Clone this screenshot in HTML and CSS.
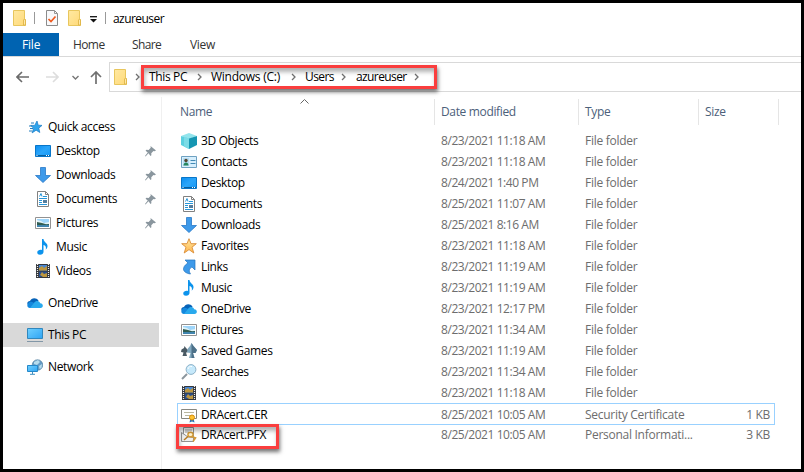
FILE: index.html
```
<!DOCTYPE html>
<html lang="en">
<head>
<meta charset="utf-8">
<title>azureuser</title>
<link rel="stylesheet" href="styles.css">
</head>
<body>
<svg class="sprite" aria-hidden="true">
  <defs>
    <linearGradient id="g-folder" x1="0" y1="0" x2="1" y2="1"><stop offset="0" stop-color="#ffe9a2"/><stop offset="1" stop-color="#ffd978"/></linearGradient>
    <linearGradient id="g-blue" x1="0" y1="0" x2="1" y2="1"><stop offset="0" stop-color="#0b8df0"/><stop offset=".5" stop-color="#2ba6fa"/><stop offset="1" stop-color="#1597f5"/></linearGradient>
    <linearGradient id="g-screen" x1="0" y1="0" x2="1" y2="1"><stop offset="0" stop-color="#6fd0ff"/><stop offset="1" stop-color="#2fa4f4"/></linearGradient>
    <linearGradient id="g-star" x1="0" y1="0" x2="0" y2="1"><stop offset="0" stop-color="#ffe7a0"/><stop offset="1" stop-color="#ffb64d"/></linearGradient>
  </defs>
  <symbol id="folder" viewBox="0 0 13 16"><path d="M.5.5h11v9h1v6H.5z" fill="url(#g-folder)" stroke="#e8c65d"/><path d="M10.5 15V10l1-1 1 1v5z" fill="#ffe9a8" stroke="#dcb03f" stroke-width=".8"/></symbol>
  <symbol id="check" viewBox="0 0 12 16"><path d="M.5.5h8l3 3v12H.5z" fill="#f8f9fb" stroke="#8b8b8b"/><path d="M8.500.5v3h3" fill="none" stroke="#999"/><path d="M2.500 9l2.500 2.500 4.500-5" fill="none" stroke="#f05a1e" stroke-width="1.700"/></symbol>
  <symbol id="quick" viewBox="0 0 16 16"><path d="M10 2l1.200 4.200 3.800.2-3.200 2.700 1 4.400-3.700-2.300-4 2.700 1.500-4.600-2.900-2.900h4z" fill="#2fa5ed" stroke="#1679c4" stroke-width=".7"/><path d="M4 4h3M2 7h3M3 9.500h3M2 12h3" stroke="#267fbd"/></symbol>
  <symbol id="desktop" viewBox="0 0 16 16"><path d="M.5 2.500h15v11H.5z" fill="url(#g-blue)" stroke="#0876c9"/><path d="M1 12.500h14" stroke="#075f9e"/><path d="M1.500 12.500h1M11 12.500h1M13 12.500h1" stroke="#fff"/></symbol>
  <symbol id="download" viewBox="0 0 16 16"><path d="M5.500.5h5v8h5L8 15.500.5 8.500h5z" fill="#3e9aea" stroke="#2878c8" stroke-width=".8"/></symbol>
  <symbol id="document" viewBox="0 0 16 16"><path d="M2.500.5h8l3 3v12h-11z" fill="#fff" stroke="#818181"/><path d="M10.500.5v3h3" fill="none" stroke="#818181"/><path d="M4.500 5.500L6 2.500l1 3M8 5.500h4M4 7.500h8M4 9.500h3M4 11.500h3M4 13.500h8" fill="none" stroke="#2795d8"/><path d="M8 9h4v3H8z" fill="#547d9d"/></symbol>
  <symbol id="picture" viewBox="0 0 16 16"><path d="M.5 2.500h15v11H.5z" fill="#fff" stroke="#929292"/><path d="M2 4h12v8H2z" fill="#9ed5fa"/><path d="M2 5l4 1 3 2 5-1v2H2z" fill="#e1f3f8"/><path d="M2 7l5 1 4 1.200 3-.2v1.500H2z" fill="#315d52"/><path d="M2 10h12v2H2z" fill="#4084ae"/></symbol>
  <symbol id="music" viewBox="0 0 16 16"><path d="M7 0h1.500c.2 3.300 4.500 4 4 7.500-.2 1.500-1 2.500-1.800 3.200C11.500 8 10.500 6.500 8.500 6v7c0 1.500-1.500 2.700-3.500 2.700S2 14.500 2.300 13c.3-1.600 2.500-2.700 4.700-2z" fill="#0c93ec"/></symbol>
  <symbol id="video" viewBox="0 0 16 16"><path d="M1 1h14v14H1z" fill="#35383d"/><path d="M4 2h8v5.500H4z" fill="#4785d1"/><path d="M4 8.500h8V14H4z" fill="#284f91"/><path d="M4 5l3-2 2 2 3-2v4.500H4zM5 12l2-3 2 2 3-1v4H8z" fill="#bd9740"/><path d="M2.500 1v14M13.500 1v14" stroke="#eee" stroke-width="1.200" stroke-dasharray="1 1"/></symbol>
  <symbol id="onedrive" viewBox="0 0 16 16"><path d="M3 6c1-3 6-4.200 8.500-.5L9 10H1C-.5 8.500.5 6 3 6z" fill="#0763b8"/><path d="M2.500 7c3-1 4 1 6 2L5 13H3C-.2 13-.7 9 2.500 7z" fill="#1488dd"/><path d="M7 8c1.500-2.500 5.200-2.700 6.200.3 3.500.2 3.500 4.700.3 4.700H3z" fill="#29a9ed"/></symbol>
  <symbol id="pc" viewBox="0 0 16 16"><path d="M.5 1.500h15v10H.5z" fill="url(#g-screen)" stroke="#3187bd"/><path d="M0 14.500h16" stroke="#8297a7"/></symbol>
  <symbol id="network" viewBox="0 0 16 16"><circle cx="10.500" cy="6" r="5.300" fill="#649bc5" stroke="#517d9c" stroke-width=".6"/><path d="M7 3l4-2 2 2-3 3-3-1zM12 7l3-2-.5 4-2 1z" fill="#b7dced"/><path d="M.5 6.500h10v6H.5z" fill="url(#g-screen)" stroke="#2588c9"/><path d="M5.500 13v2M3 15.300h5" stroke="#408fc0"/></symbol>
  <symbol id="cube" viewBox="0 0 16 16"><path d="M0 3l8-3 8 3-8 3z" fill="#92e4ec"/><path d="M0 3l8 2.500V16l-8-4z" fill="#5bd0df"/><path d="M8 5.500L16 3v9l-8 4z" fill="#1596b2"/><path d="M3 4l5 1.500V16l-5-2.500z" fill="#7bdbe6"/></symbol>
  <symbol id="contact" viewBox="0 0 16 16"><path d="M.5 2.500h15v11H.5z" fill="#d7effd" stroke="#6ea1c1"/><path d="M2 4h6v8H2z" fill="#b5dcf2"/><circle cx="5" cy="6.500" r="1.700" fill="#57462f"/><path d="M2.500 11.500c0-4 5-4 5 0z" fill="#25865d"/><path d="M9.500 6.500h5M9.500 9.500h5" stroke="#428ab5"/></symbol>
  <symbol id="star" viewBox="0 0 16 16"><path d="M8 .7l2 5h5.300L11 9.200l1.800 5.800L8 11.600 3.200 15 5 9.200.7 5.700H6z" fill="url(#g-star)" stroke="#d98b35" stroke-width=".9"/></symbol>
  <symbol id="link" viewBox="0 0 16 16"><path d="M4 1h10v10l-3-3c-3 1.500-3.500 4-1.500 7C5 14.500 2 12 2.500 9.500 3 6.500 5.500 5 7 4z" fill="#3e9aea" stroke="#2474bd" stroke-width=".7"/></symbol>
  <symbol id="games" viewBox="0 0 16 16"><path d="M3.500 3l1.500 2 2.500 2.500L6 9.500l-1 0 1 3.500H1.500l1-3.500L0 9l.5-2.500L3 5z" fill="#4a5a64"/><path d="M10.500 0l2 3 3.500 4-1.500 3-2.500 0 1.500 5H8l1.500-5L6 9.500 6.500 6 9 3z" fill="#82a9bf"/><path d="M10.500 0v15h3L12 10h2.500L16 7l-3.500-4z" fill="#4d7189"/></symbol>
  <symbol id="search" viewBox="0 0 16 16"><path d="M1 15l5-5" stroke="#8c969d" stroke-width="2"/><circle cx="10" cy="5.500" r="4.900" fill="#c6e9fb" stroke="#8eb2c8"/><path d="M7 5c.5-2 2-3 4-2.500" fill="none" stroke="#fff"/></symbol>
  <symbol id="cer" viewBox="0 0 16 16"><path d="M.5 2.500h15v9H.5z" fill="#fff" stroke="#878780"/><path d="M3 5.500h10M4 8.500h5" stroke="#b9b79f"/><path d="M9.500 11l-1 4.500 2.500-1 2.500 1-1-4.500z" fill="#3076b7"/><circle cx="11" cy="10.500" r="2.500" fill="#ffc435" stroke="#d48c0b"/></symbol>
  <symbol id="pfx" viewBox="0 0 16 16"><path d="M2.500.5h10v11h-10z" fill="#fff" stroke="#969696"/><path d="M4 3h7M4 5h4" stroke="#a8a8a8"/><path d="M.5 5.500v9h12v-4L7 10z" fill="#eee" stroke="#929292"/><path d="M7.500 9L3 13" stroke="#b67b22" stroke-width="1.500"/><ellipse cx="9.500" cy="7.500" rx="2.600" ry="2.200" fill="#fff3d0" stroke="#d39a37" stroke-width="1.400"/><path d="M10.500 9.500l4 1.500-2.500 3.500" fill="none" stroke="#d39a37" stroke-width="1.600"/></symbol>
  <symbol id="pin" viewBox="0 0 10 10"><path d="M5 0l5 4-1.300.7-1-.2-2 2 .1 2L5 9 3.200 6.700.5 9.500 0 9l2.500-3L.5 4.300l.8-.8 2 .1 1.900-2z" fill="#8a969e"/></symbol>
  <symbol id="chev" viewBox="0 0 5 8"><path d="M1 1l3 3-3 3" fill="none" stroke="#707070" stroke-width="1.300"/></symbol>
  <symbol id="arrow" viewBox="0 0 13 12"><path d="M1 6h12M6 1L1 6l5 5" fill="none" stroke="currentColor" stroke-width="1.600"/></symbol>
</svg>

<div class="window">
  <header class="titlebar">
    <svg class="folder"><use href="#folder"/></svg><i class="bar b1"></i>
    <svg class="check"><use href="#check"/></svg>
    <svg class="folder f2"><use href="#folder"/></svg>
    <svg class="menu" viewBox="0 0 7 7"><path d="M0 .7h7" stroke="#111" stroke-width="1.300"/><path d="M0 3h7L3.500 6.500z" fill="#111"/></svg><i class="bar b2"></i>
    <span class="title">azureuser</span>
  </header>
  <nav class="tabs"><span class="tab file">File</span><span class="tab home">Home</span><span class="tab share">Share</span><span class="tab view">View</span></nav>
  <div class="address-row">
    <svg class="arrow back"><use href="#arrow"/></svg>
    <svg class="arrow forward"><use href="#arrow"/></svg>
    <svg class="recent" viewBox="0 0 7 5"><path d="M.5 1l3 3 3-3" fill="none" stroke="#777" stroke-width="1.400"/></svg>
    <svg class="up" viewBox="0 0 12 13"><path d="M6 13V1M1 6l5-5 5 5" fill="none" stroke="#707070" stroke-width="1.700"/></svg>
    <div class="address">
      <svg class="folder"><use href="#folder"/></svg>
      <svg class="chev c0"><use href="#chev"/></svg>
      <span class="crumb k1">This PC</span><svg class="chev"><use href="#chev"/></svg>
      <span class="crumb k2">Windows (C:)</span><svg class="chev"><use href="#chev"/></svg>
      <span class="crumb k3">Users</span><svg class="chev"><use href="#chev"/></svg>
      <span class="crumb k4">azureuser</span><svg class="chev"><use href="#chev"/></svg>
    </div>
  </div>
  <div class="body">
    <aside class="side">
      <div class="item top"><svg class="icon"><use href="#quick"/></svg><span>Quick access</span></div>
      <div class="item"><svg class="icon"><use href="#desktop"/></svg><span>Desktop</span><svg class="pin"><use href="#pin"/></svg></div>
      <div class="item"><svg class="icon"><use href="#download"/></svg><span>Downloads</span><svg class="pin"><use href="#pin"/></svg></div>
      <div class="item"><svg class="icon"><use href="#document"/></svg><span>Documents</span><svg class="pin"><use href="#pin"/></svg></div>
      <div class="item"><svg class="icon"><use href="#picture"/></svg><span>Pictures</span><svg class="pin"><use href="#pin"/></svg></div>
      <div class="item"><svg class="icon"><use href="#music"/></svg><span>Music</span></div>
      <div class="item"><svg class="icon"><use href="#video"/></svg><span>Videos</span></div>
      <div class="item top gap"><svg class="icon"><use href="#onedrive"/></svg><span>OneDrive</span></div>
      <div class="item top gap selected"><svg class="icon"><use href="#pc"/></svg><span>This PC</span></div>
      <div class="item top gap"><svg class="icon"><use href="#network"/></svg><span>Network</span></div>
    </aside>
    <main class="files">
      <div class="head"><span class="name">Name<svg class="sort" viewBox="0 0 9 5"><path d="M.5 4.500l4-4 4 4" fill="none" stroke="#666"/></svg></span><span>Date modified</span><span>Type</span><span>Size</span></div>
      <div class="row"><svg class="icon"><use href="#cube"/></svg><span>3D Objects</span><span class="date">8/23/2021 11:18 AM</span><span class="type">File folder</span><span></span></div>
      <div class="row"><svg class="icon"><use href="#contact"/></svg><span>Contacts</span><span class="date">8/23/2021 11:18 AM</span><span class="type">File folder</span><span></span></div>
      <div class="row"><svg class="icon"><use href="#desktop"/></svg><span>Desktop</span><span class="date">8/24/2021 1:40 PM</span><span class="type">File folder</span><span></span></div>
      <div class="row"><svg class="icon"><use href="#document"/></svg><span>Documents</span><span class="date">8/25/2021 11:07 AM</span><span class="type">File folder</span><span></span></div>
      <div class="row"><svg class="icon"><use href="#download"/></svg><span>Downloads</span><span class="date">8/25/2021 8:16 AM</span><span class="type">File folder</span><span></span></div>
      <div class="row"><svg class="icon"><use href="#star"/></svg><span>Favorites</span><span class="date">8/23/2021 11:18 AM</span><span class="type">File folder</span><span></span></div>
      <div class="row"><svg class="icon"><use href="#link"/></svg><span>Links</span><span class="date">8/23/2021 11:19 AM</span><span class="type">File folder</span><span></span></div>
      <div class="row"><svg class="icon"><use href="#music"/></svg><span>Music</span><span class="date">8/23/2021 11:19 AM</span><span class="type">File folder</span><span></span></div>
      <div class="row"><svg class="icon"><use href="#onedrive"/></svg><span>OneDrive</span><span class="date">8/23/2021 12:17 PM</span><span class="type">File folder</span><span></span></div>
      <div class="row"><svg class="icon"><use href="#picture"/></svg><span>Pictures</span><span class="date">8/23/2021 11:34 AM</span><span class="type">File folder</span><span></span></div>
      <div class="row"><svg class="icon"><use href="#games"/></svg><span>Saved Games</span><span class="date">8/23/2021 11:19 AM</span><span class="type">File folder</span><span></span></div>
      <div class="row"><svg class="icon"><use href="#search"/></svg><span>Searches</span><span class="date">8/23/2021 11:34 AM</span><span class="type">File folder</span><span></span></div>
      <div class="row"><svg class="icon"><use href="#video"/></svg><span>Videos</span><span class="date">8/23/2021 11:18 AM</span><span class="type">File folder</span><span></span></div>
      <div class="row focused"><svg class="icon"><use href="#cer"/></svg><span>DRAcert.CER</span><span class="date">8/25/2021 10:05 AM</span><span class="type">Security Certificate</span><span class="size">1 KB</span></div>
      <div class="row"><svg class="icon"><use href="#pfx"/></svg><span>DRAcert.PFX</span><span class="date">8/25/2021 10:05 AM</span><span class="type">Personal Informati...</span><span class="size">3 KB</span></div>
    </main>
  </div>
</div>
<div class="callout path"></div>
<div class="callout cert"></div>
</body>
</html>
```
FILE: styles.css
```
* { box-sizing: border-box; }
body { margin: 0; font: 12px/20px "Open Sans", "Noto Sans", sans-serif; letter-spacing: -0.35px; color: #000; }
span { white-space: nowrap; }
svg { display: block; flex: none; }
.sprite { position: absolute; width: 0; height: 0; }
.window { width: 804px; height: 472px; border: 3px solid #000; background: #fff; overflow: hidden; }
.folder { width: 13px; height: 16px; }
.icon { width: 16px; height: 16px; }

.titlebar { display: flex; align-items: center; height: 30px; padding-left: 10px; }
.bar { width: 1px; height: 12px; background: #999; }
.b1 { margin-left: 8px; }
.check { width: 12px; height: 16px; margin-left: 11px; }
.f2 { margin-left: 10px; }
.menu { width: 7px; height: 7px; margin: 2px 0 0 9px; }
.b2 { margin-left: 8px; }
.title { margin: 1px 0 0 7px; letter-spacing: -0.6px; }
.title { letter-spacing: -0.55px; }

.tabs { display: flex; height: 24px; border-bottom: 1px solid #d9d9d9; line-height: 24px; letter-spacing: -0.6px; color: #333; }
.file { width: 56px; padding-left: 19px; background: #0063b1; color: #fff; letter-spacing: -0.2px; }
.home { width: 59px; padding-left: 14px; }
.share { width: 58px; padding-left: 14px; }
.view { padding-left: 14px; letter-spacing: -0.3px; }

.address-row { display: flex; align-items: center; height: 40px; }
.arrow { width: 13px; height: 12px; }
.back { margin-left: 13px; color: #6a6a6a; }
.forward { margin-left: 17px; color: #ddd; transform: scaleX(-1); }
.recent { width: 7px; height: 5px; margin-left: 13px; }
.up { width: 12px; height: 13px; margin: 1px 0 0 11px; }
.address { display: flex; align-items: center; flex: 1; height: 30px; margin-left: 7px; padding-left: 4px; border: 1px solid #d9d9d9; border-right: 0; }
.chev { width: 5px; height: 8px; }
.c0 { margin: 0 9px 0 8px; }
.crumb { margin-top: -1px; }
.k1 { width: 48px; }
.k2 { width: 80px; margin-left: 9px; letter-spacing: -0.25px; }
.k3 { width: 36px; margin-left: 9px; letter-spacing: -0.6px; }
.k4 { width: 58px; margin-left: 10px; letter-spacing: -0.6px; }

.body { display: flex; height: 372px; }
.side { width: 159px; padding-top: 18px; border-right: 1px solid #f0f0f0; }
.item { display: flex; align-items: center; width: 156px; height: 24px; padding: 0 3px 0 32px; }
.item span { margin-left: 5px; }
.top { padding-left: 24px; }
.gap { margin-top: 8px; }
.selected { background: #d9d9d9; }
.pin { width: 11px; height: 11px; margin-left: auto; }

.files { flex: 1; padding: 2px 0 0 15px; }
.head { display: grid; grid-template-columns: 258px 144px 120px 80px; height: 25px; margin-bottom: 6px; line-height: 26px; color: #4c607a; }
.head span { padding-left: 6px; border-right: 1px solid #e5e5e5; }
.head .name { display: flex; padding-left: 3px; }
.sort { width: 9px; height: 5px; margin-left: 88px; }
.row { display: grid; grid-template-columns: 20px 240px 144px 119px 66px; align-items: center; width: 598px; height: 21px; padding-left: 4px; line-height: 21px; }
.date, .type, .size { color: #6d6d6d; }
.date { letter-spacing: -0.43px; }
.type { letter-spacing: -0.27px; }
.size { text-align: right; }
.focused { height: 22px; margin-bottom: -1px; padding-left: 3px; border: 1px solid #99d1ff; }

.callout { position: absolute; border: 3px solid #fa3e3e; box-shadow: 1px 3px 4px rgba(0, 0, 0, .55), inset 1px 4px 4px rgba(0, 0, 0, .3); }
.path { left: 141px; top: 65px; width: 296px; height: 24px; }
.cert { left: 176px; top: 424px; width: 103px; height: 25px; }
```
